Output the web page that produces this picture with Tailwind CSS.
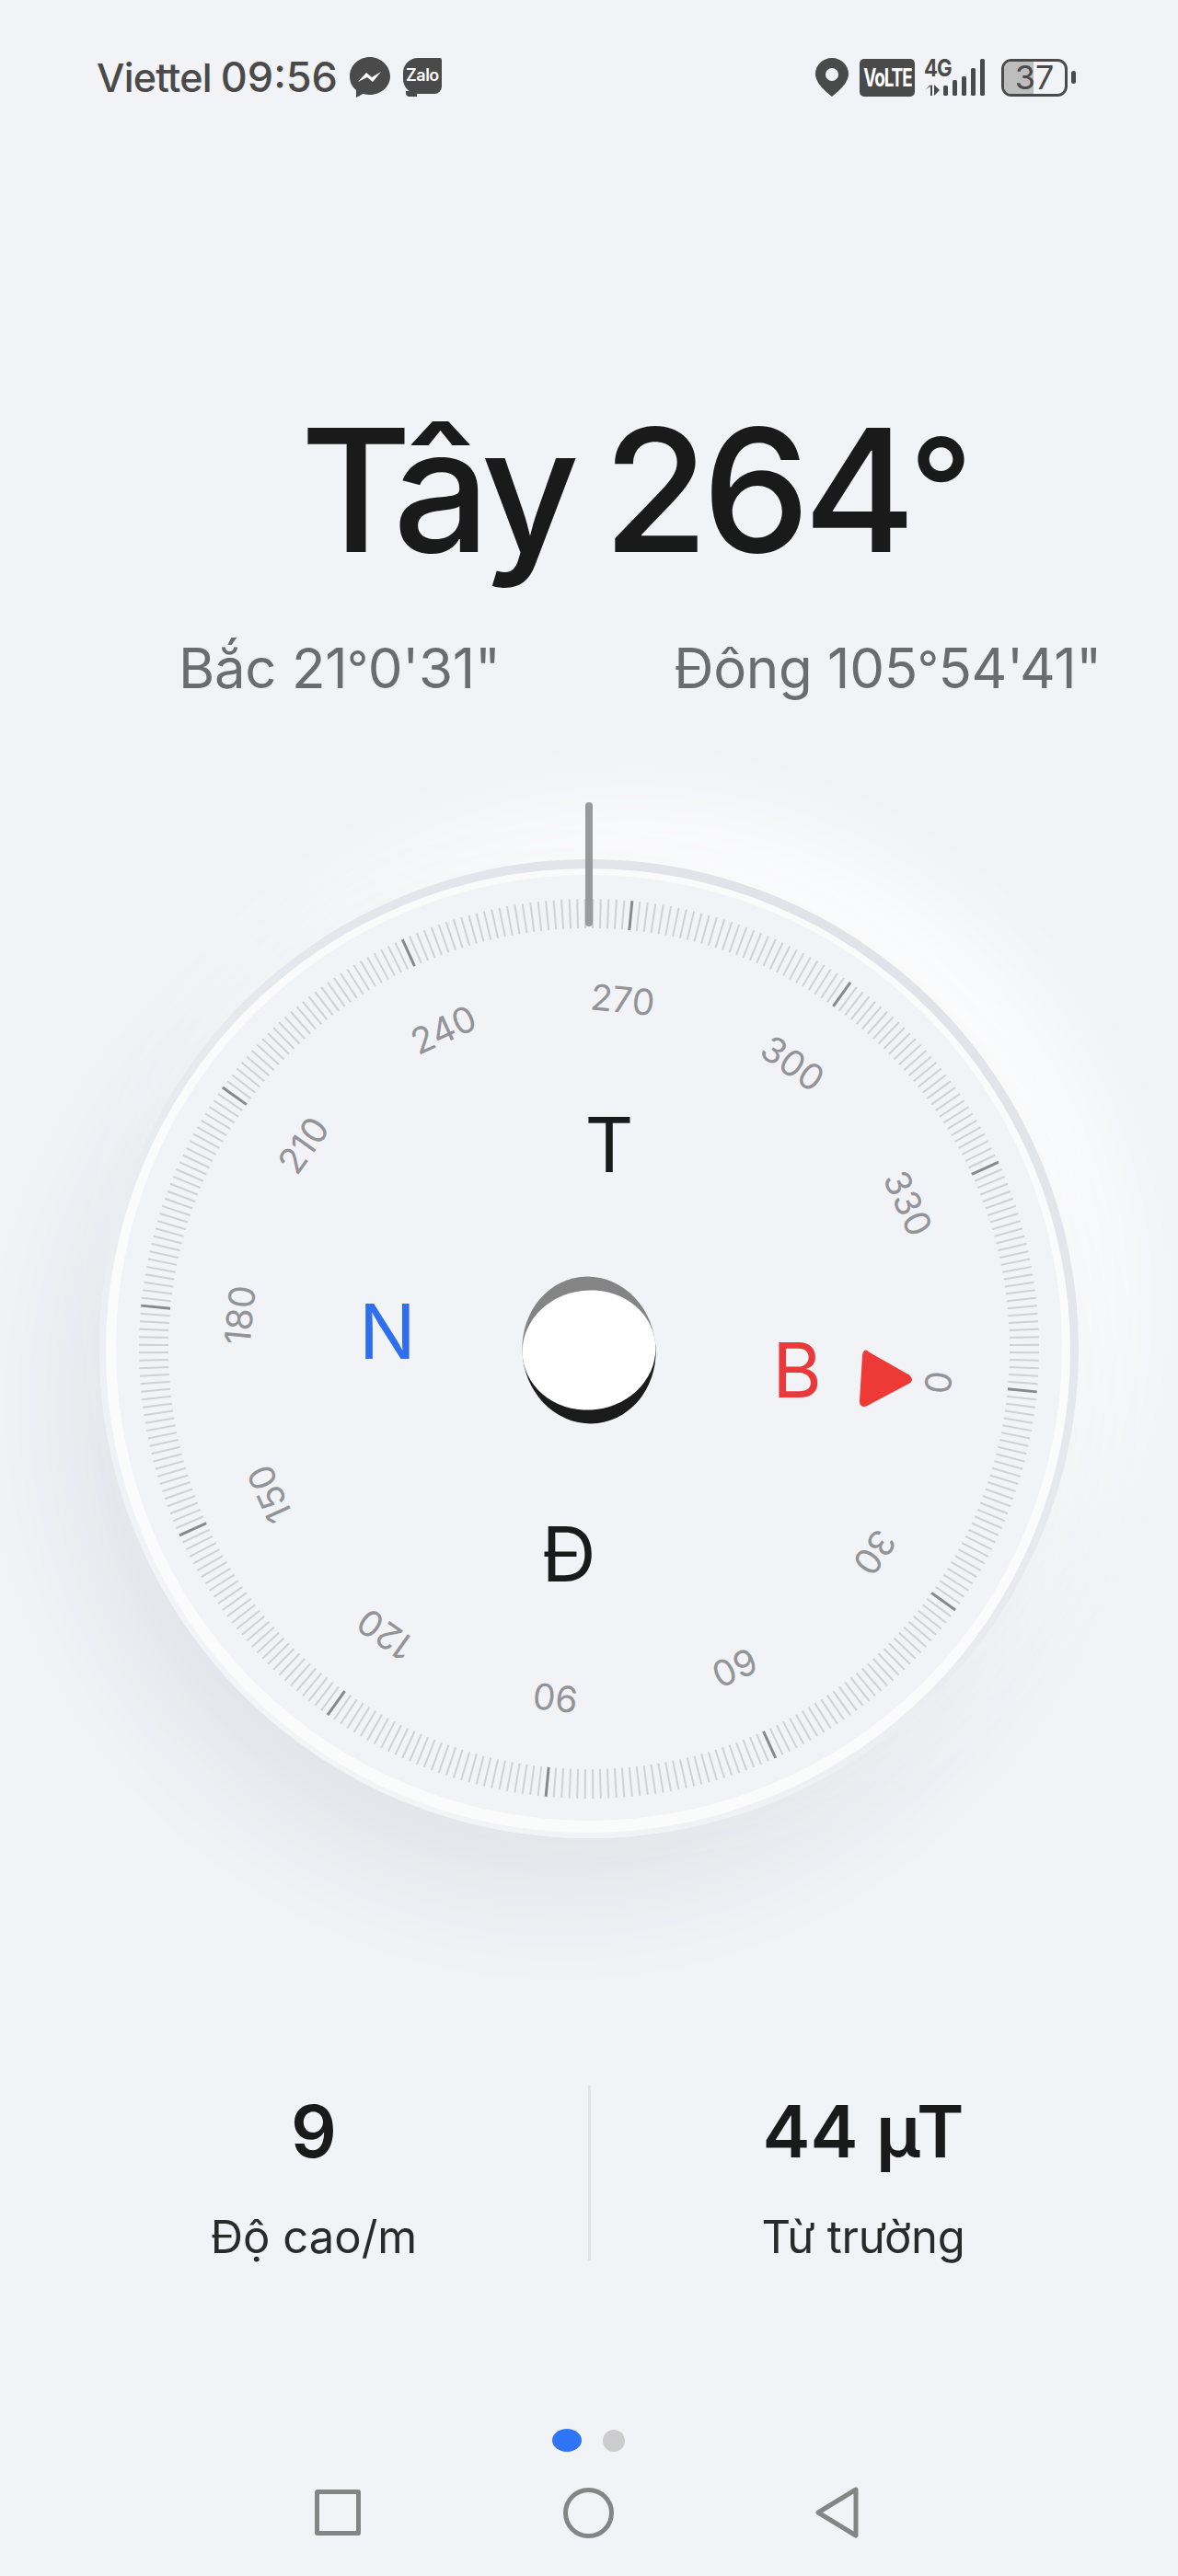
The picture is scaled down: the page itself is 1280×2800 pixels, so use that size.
<!DOCTYPE html>
<html lang="vi">
<head>
  <meta charset="UTF-8">
  <meta name="viewport" content="width=device-width, initial-scale=1.0">
  <title>La bàn</title>
  <script src="https://cdn.jsdelivr.net/npm/@tailwindcss/browser@4"></script>
</head>
<body class="bg-[#f2f3f7] [font-family:Inter,sans-serif] overflow-x-hidden">
  <div class="flex flex-col w-[1280px] h-[2800px] overflow-hidden">

    <!-- status bar -->
    <header class="flex justify-between items-center h-[168px] pl-[105px] pr-[111px] text-[#4a4a4a] shrink-0">
      <div class="flex items-center">
        <span class="text-[43px] font-medium tracking-[-0.8px]">Viettel</span>
        <span class="text-[45px] font-medium ml-[10px]">09:56</span>
        <svg class="ml-[13px]" width="44" height="44" viewBox="0 0 44 44">
          <path d="M22 0C10 0 0 9 0 21c0 6 2.500 11.500 7 15v8l7.500-4c2.500.7 5 1 7.500 1 12 0 22-9 22-20S34 0 22 0z" fill="#4a4a4a"/>
          <path d="M9 27l9-10 6 5 10-6-9 11-6-5z" fill="#fff"/>
        </svg>
        <div class="relative ml-[14px] w-[42px] h-[39px] -mt-[4px] bg-[#4a4a4a] rounded-tl-[16px] rounded-tr-[2px] rounded-bl-[16px] rounded-br-[8px] flex items-center justify-center">
          <span class="text-white text-[18px] font-semibold leading-none tracking-[-0.5px]">Zalo</span>
          <div class="absolute left-[3px] -bottom-[3px] w-[12px] h-[6px] bg-[#4a4a4a] rounded-bl-[4px]"></div>
        </div>
      </div>
      <div class="flex items-center">
        <svg width="36" height="42" viewBox="0 0 36 42">
          <path fill-rule="evenodd" d="M18 0C8 0 0 8 0 17c0 11 12 20 18 25 6-5 18-14 18-25C36 8 28 0 18 0zm0 11a7 7 0 1 1 0 14 7 7 0 0 1 0-14z" fill="#4a4a4a"/>
        </svg>
        <div class="ml-[12px] w-[60px] h-[41px] bg-[#4a4a4a] rounded-[5px] flex items-center justify-center overflow-hidden">
          <span class="text-white text-[27px] font-bold leading-none tracking-[-1.500px] scale-x-[0.7]">VoLTE</span>
        </div>
        <div class="relative ml-[10px] w-[66px] h-[42px]">
          <span class="absolute left-0 top-0 text-[26px] font-bold leading-[22px] tracking-[-1px] scale-x-[0.85] origin-left">4G</span>
          <svg class="absolute left-0 top-0" width="66" height="42" viewBox="0 0 66 42" fill="#4a4a4a">
            <path d="M1 35l6-6v12h2V29zM11 29v12l6-6z"/>
            <rect x="21" y="30" width="5" height="11" rx="1.500"/>
            <rect x="31" y="24" width="5" height="17" rx="1.500"/>
            <rect x="41" y="20" width="5" height="21" rx="1.500"/>
            <rect x="51" y="11" width="5" height="30" rx="1.500"/>
            <rect x="61" y="1" width="5" height="40" rx="1.500"/>
          </svg>
        </div>
        <div class="relative ml-[18px] w-[72px] h-[41px] border-[3px] border-[#4a4a4a] rounded-[11px] overflow-hidden flex items-center justify-center">
          <div class="absolute left-0 top-0 bottom-0 w-[32px] bg-[#bdbdbd]"></div>
          <span class="relative text-[36px] leading-none">37</span>
        </div>
        <div class="ml-[4px] w-[5px] h-[14px] bg-[#4a4a4a] rounded-full"></div>
      </div>
    </header>

    <!-- heading -->
    <h1 class="text-center text-[#1a1a1a] text-[186px] leading-[230px] font-[470] tracking-[-7px] [word-spacing:-10px] mt-[245px] ml-[96px] h-[230px] translate-y-[2px] shrink-0">Tây 264<span class="text-[150px] align-[16px]">°</span></h1>
    <div class="flex justify-between pl-[194px] pr-[83px] mt-[43px] text-[60px] leading-[80px] tracking-[-0.3px] text-[#6b6c70] shrink-0">
      <span>Bắc 21<span class="text-[50px] align-[4px]">°</span>0'31"</span>
      <span>Đông 105<span class="text-[50px] align-[4px]">°</span>54'41"</span>
    </div>

    <!-- dial -->
    <section class="relative h-[1260px] mt-[74px] shrink-0">
      <div class="absolute left-[108px] top-[94px] w-[1064px] h-[1064px] rounded-full shadow-[-30px_60px_120px_rgba(40,45,60,0.08),50px_-50px_110px_rgba(255,255,255,0.85)]"></div>
      <svg id="dial" class="absolute left-0 top-0" width="1280" height="1260" viewBox="0 840 1280 1260">
        <defs>
          <linearGradient id="ring" x1="0.8" y1="0" x2="0.2" y2="1">
            <stop offset="0" stop-color="#e0e2e8"/>
            <stop offset="0.5" stop-color="#e8eaee"/>
            <stop offset="0.85" stop-color="#f2f3f6"/>
            <stop offset="1" stop-color="#f4f5f7"/>
          </linearGradient>
        </defs>
        <circle cx="640" cy="1466" r="532" fill="url(#ring)"/>
        <circle cx="639" cy="1468" r="524" fill="#fbfbfc"/>
        <circle cx="640" cy="1465" r="514" fill="#f2f3f7"/>
        <g id="ticks"></g>
        <g id="labels" class="[font-family:Inter,sans-serif]"></g>
        <rect x="636" y="872" width="8" height="135" rx="4" fill="#9a9a9c"/>
        <g class="[font-family:Inter,sans-serif]" font-size="82" font-weight="420" text-anchor="middle">
          <text x="662" y="1274" fill="#1a1a1a">T</text>
          <text x="421" y="1477" fill="#2f6fed">N</text>
          <text x="866" y="1519" fill="#e9393a">B</text>
          <text x="618" y="1719" fill="#1a1a1a">Đ</text>
        </g>
        <path d="M943 1470 L987 1495 Q993 1500 987 1503 L942 1527 Q935 1530 935 1523 L938 1473 Q939 1466 943 1470z" fill="#ee3a36" stroke="#ee3a36" stroke-width="2" stroke-linejoin="round"/>
        <g transform="rotate(-6.700 640 1467.500)">
          <path d="M567.500 1467.500 A72.500 80 0 0 1 712.500 1467.500z" fill="#848484"/>
          <path d="M567.500 1467.500 A72.500 80 0 0 0 712.500 1467.500z" fill="#1b1b1b"/>
          <ellipse cx="640" cy="1467.500" rx="72.500" ry="65" fill="#fff"/>
        </g>
      </svg>
    </section>

    <!-- stats -->
    <section class="flex items-start h-[190px] mt-[167px] shrink-0">
      <div class="w-[640px] pl-[42px] pt-[5px] flex flex-col items-center">
        <span class="text-[78px] leading-[90px] font-semibold text-[#1a1a1a]">9</span>
        <span class="text-[49px] leading-[60px] mt-[40px] text-[#2a2a2a]">Độ cao/m</span>
      </div>
      <div class="w-[3px] h-[190px] bg-[#e3e4e8] -ml-[1px]"></div>
      <div class="flex-1 pr-[46px] pt-[5px] flex flex-col items-center">
        <span class="text-[78px] leading-[90px] font-semibold text-[#1a1a1a]">44 µT</span>
        <span class="text-[49px] leading-[60px] mt-[40px] text-[#2a2a2a] tracking-[-0.3px]">Từ trường</span>
      </div>
    </section>

    <!-- page dots -->
    <div class="flex justify-center items-center gap-[23px] mt-[183px] pr-[1px] shrink-0">
      <div class="w-[32px] h-[25px] rounded-[50%] bg-[#2f74f5]"></div>
      <div class="w-[24px] h-[24px] rounded-full bg-[#cccccc]"></div>
    </div>

    <!-- nav bar -->
    <nav class="flex justify-between items-center pl-[342px] pr-[346px] mt-[38px] shrink-0">
      <div class="w-[50px] h-[50px] border-[5px] border-[#858585] rounded-[3px]"></div>
      <div class="w-[55px] h-[55px] border-[5px] border-[#858585] rounded-full"></div>
      <svg width="48" height="56" viewBox="0 0 48 56">
        <path d="M44 3L3 28l41 25z" fill="none" stroke="#858585" stroke-width="5" stroke-linejoin="round"/>
      </svg>
    </nav>
  </div>

  <script>
    const NS = 'http://www.w3.org/2000/svg';
    const cx = 640;
    const cy = 1466;
    const heading = 264.5;
    const ticksEl = document.getElementById('ticks');
    const labelsEl = document.getElementById('labels');

    for (let deg = 0; deg < 360; deg++) {
      const line = document.createElementNS(NS, 'line');
      const major = deg % 30 === 0;
      line.setAttribute('x1', cx);
      line.setAttribute('x2', cx);
      line.setAttribute('y1', cy - 489);
      line.setAttribute('y2', cy - 457);
      line.setAttribute('stroke', major ? '#87898c' : '#cfd1d5');
      line.setAttribute('stroke-width', major ? 3 : 2);
      line.setAttribute('transform', `rotate(${deg - heading} ${cx} ${cy})`);
      ticksEl.appendChild(line);
    }

    for (let deg = 0; deg < 360; deg += 30) {
      const text = document.createElementNS(NS, 'text');
      text.textContent = deg;
      text.setAttribute('x', cx);
      text.setAttribute('y', cy - 367);
      text.setAttribute('font-size', 39);
      text.setAttribute('fill', '#929497');
      text.setAttribute('text-anchor', 'middle');
      text.setAttribute('transform', `rotate(${deg - heading} ${cx} ${cy})`);
      labelsEl.appendChild(text);
    }
  </script>
</body>
</html>
